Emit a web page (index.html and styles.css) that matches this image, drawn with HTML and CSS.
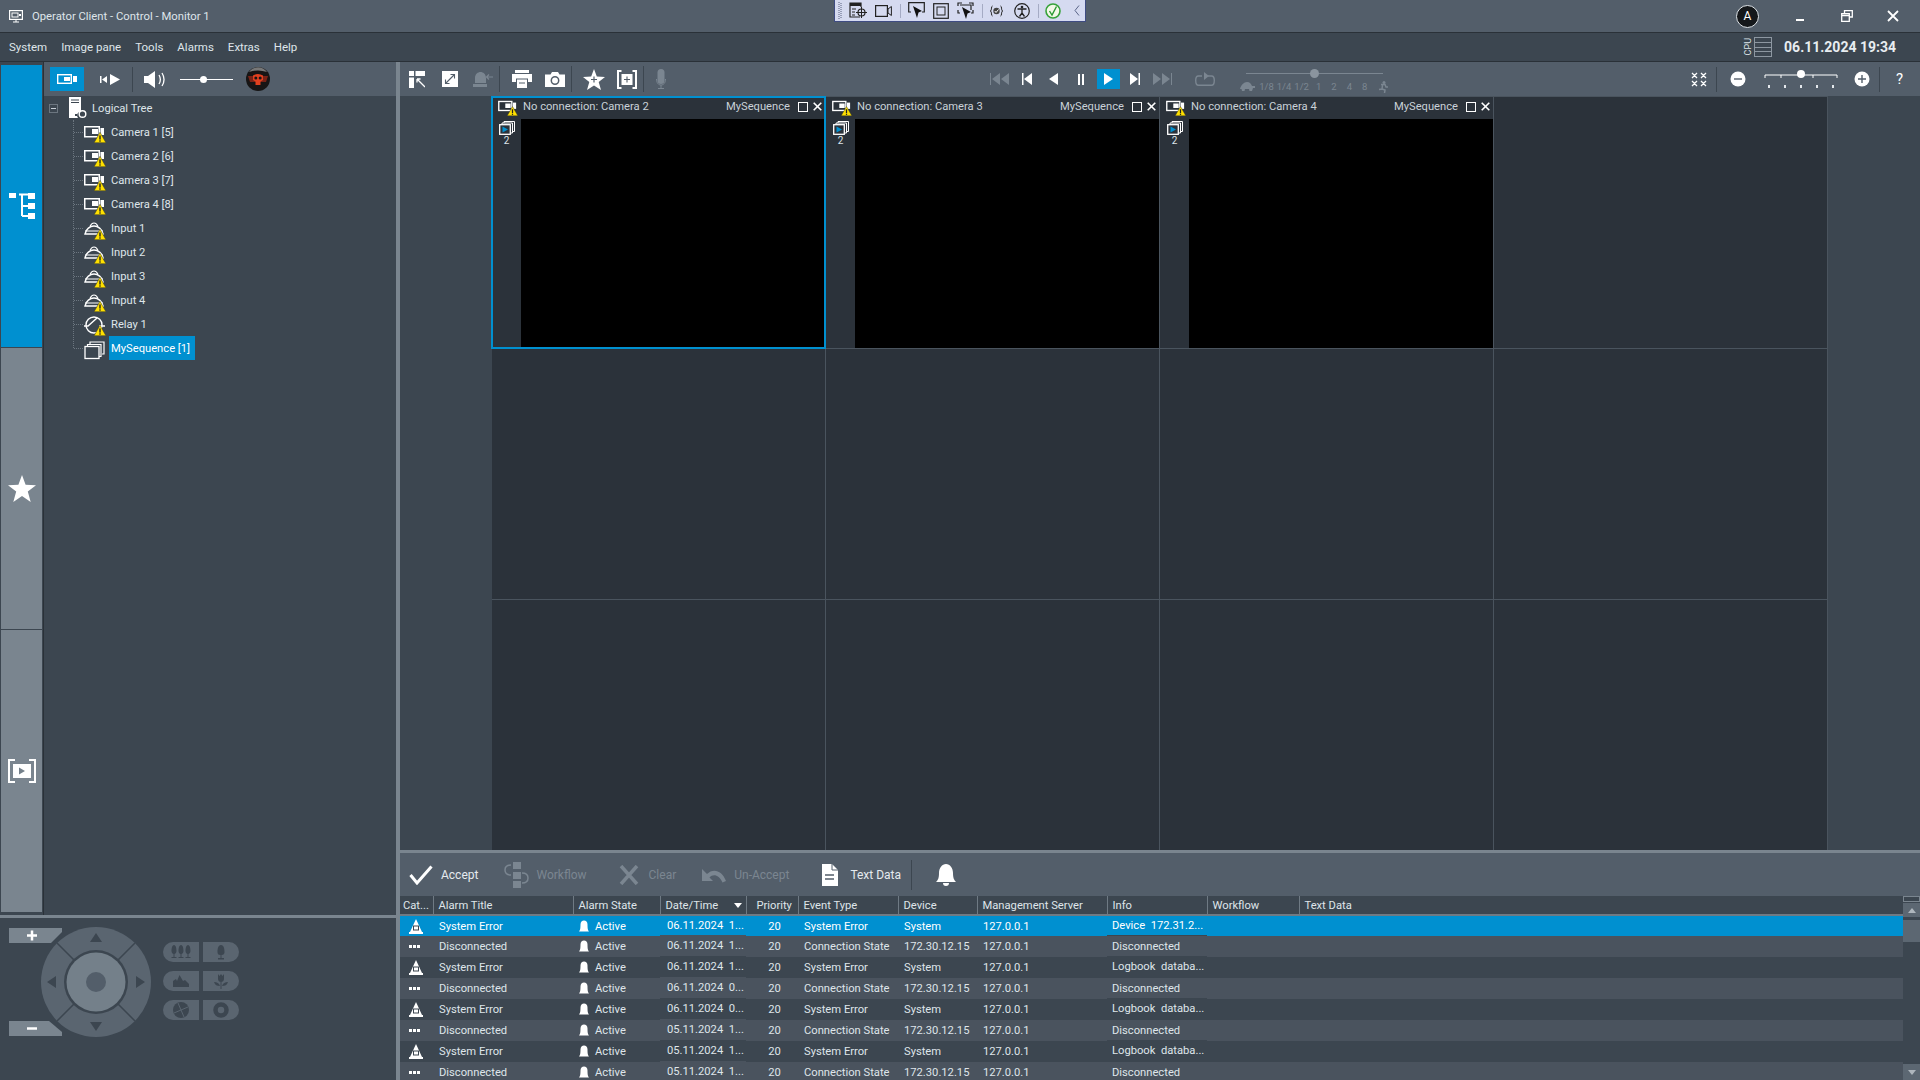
FILE: index.html
```html
<!DOCTYPE html>
<html lang="en">
<head>
  <meta charset="UTF-8">
  <title>Operator Client - Control - Monitor 1</title>
  <link rel="stylesheet" href="styles.css">
</head>
<body>
  <svg class="defs" xmlns="http://www.w3.org/2000/svg">
    <symbol id="warn" viewBox="0 0 12 11"><path d="M6 .3 11.900 10.700H.1Z" fill="#ffe000" stroke="#3a3a20" stroke-width=".5"/><rect x="5.300" y="3.400" width="1.400" height="4.200" fill="#222"/><rect x="5.300" y="8.300" width="1.400" height="1.400" fill="#222"/></symbol>
    <symbol id="cam" viewBox="0 0 22 20"><rect x=".75" y="2.750" width="14.500" height="10" fill="none" stroke="#fff" stroke-width="1.500"/><rect x="8" y="5" width="6" height="5" fill="#fff"/><rect x="16.500" y="4" width="3.500" height="7" fill="#fff"/><use href="#warn" x="10" y="8" width="12" height="11"/></symbol>
    <symbol id="input" viewBox="0 0 22 20"><path d="M1 14C2 9 6 6 10 6s8 3 9 8Z" fill="none" stroke="#fff" stroke-width="1.400"/><path d="M6 6.500C7 4 9 3 10 3s3 1 4 3.500M1 11H19" fill="none" stroke="#fff" stroke-width="1.200"/><use href="#warn" x="10" y="9" width="12" height="11"/></symbol>
    <symbol id="relay" viewBox="0 0 22 20"><circle cx="10" cy="9" r="8" fill="none" stroke="#fff" stroke-width="1.400"/><path d="M0 10H4L13 2M15 10H21" fill="none" stroke="#fff" stroke-width="1.400"/><use href="#warn" x="10" y="9" width="12" height="11"/></symbol>
    <symbol id="seq" viewBox="0 0 22 20"><path d="M6 4V2H20V14H18M3.500 6.500V4.500H17V16.500H15" fill="none" stroke="#fff" stroke-width="1.200"/><rect x="1" y="6.500" width="14" height="12" fill="none" stroke="#fff" stroke-width="1.300"/></symbol>
    <symbol id="seqplay" viewBox="0 0 16 14"><path d="M5 2V.5H15.500V10.500H13.500M3 3.500V2H13.500V12H11.500" fill="none" stroke="#fff"/><rect x=".7" y="3.700" width="10.600" height="9.600" fill="#2b323a" stroke="#fff" stroke-width="1.300"/><path d="M3.500 5.500 9 8.500 3.500 11.500Z" fill="#0090d0"/></symbol>
    <symbol id="bell" viewBox="0 0 10 12"><path d="M0 11.500C1 10.500 1.500 9 1.500 4.500 1.500 2 3 .5 5 .5S8.500 2 8.500 4.500C8.500 9 9 10.500 10 11.500Z" fill="#fff"/></symbol>
    <symbol id="alarmcat" viewBox="0 0 14 15"><path d="M7 0 13 13H1Z" fill="#fff"/><rect x="4.500" y="7" width="5" height="4" fill="none" stroke="#3c4650"/><rect x="0" y="13" width="14" height="2" fill="#fff"/></symbol>
    <symbol id="dots" viewBox="0 0 11 3"><path d="M0 0H3V3H0ZM4 0H7V3H4ZM8 0H11V3H8Z" fill="#fff"/></symbol>
    <symbol id="xmark" viewBox="0 0 9 9"><path d="M.7 .7 8.300 8.300M8.300 .7 .7 8.300" stroke="#fff" stroke-width="1.600"/></symbol>
  </svg>

  <header class="titlebar">
    <svg class="app-icon" viewBox="0 0 14 13"><rect x=".6" y=".6" width="12.800" height="8.800" fill="none" stroke="#fff" stroke-width="1.200"/><rect x="3" y="3" width="6" height="4" fill="none" stroke="#fff"/><rect x="10" y="4" width="2" height="2" fill="#fff"/><path d="M4 12H10M7 10V12" stroke="#fff"/></svg>
    <span class="title-text">Operator Client - Control - Monitor 1</span>
    <div class="user-badge">A</div>
    <div class="win-buttons">
      <svg class="win-btn" viewBox="0 0 12 12"><rect x="1" y="9" width="8" height="2" fill="#fff"/></svg>
      <svg class="win-btn" viewBox="0 0 12 12"><path d="M3.500 3V.7H11.300V7H8.500M.7 3.700H8.300V11.300H.7ZM.7 5.500H8.300" fill="none" stroke="#fff" stroke-width="1.300"/></svg>
      <svg class="win-btn" viewBox="0 0 12 12"><path d="M1 1 11 11M11 1 1 11" stroke="#fff" stroke-width="1.800"/></svg>
    </div>
  </header>

  <div class="tray">
    <svg width="4" height="19" viewBox="0 0 4 19"><path d="M1 1V18M3 2V18" stroke="#59617f" stroke-width="1" stroke-dasharray="1 1"/></svg>
    <svg class="tray-i tray-first" width="18" height="17" viewBox="0 0 18 17"><path d="M11 15H1V1H12V5" fill="none" stroke="#222" stroke-width="1.200"/><rect x="1" y="1" width="11" height="3" fill="#222"/><path d="M3 7H7M3 10H6M3 13H6" stroke="#222"/><circle cx="12.500" cy="10.500" r="3.500" fill="none" stroke="#222" stroke-width="1.200"/><path d="M12.500 5V16M7 10.500H18" stroke="#222"/></svg>
    <svg class="tray-i" width="17" height="12" viewBox="0 0 17 12"><rect x=".6" y=".6" width="11.800" height="10.800" fill="none" stroke="#222" stroke-width="1.200"/><path d="M13 4 16.400 1.500V10.500L13 8Z" fill="none" stroke="#222"/></svg>
    <i class="tray-sep"></i>
    <svg class="tray-i" width="17" height="17" viewBox="0 0 17 17"><path d="M3 10H.7V.7H16.300V10H14" fill="none" stroke="#222" stroke-width="1.200"/><path d="M5 4 14 9 10.500 10.500 9 16Z" fill="#111"/></svg>
    <svg class="tray-i" width="16" height="16" viewBox="0 0 16 16"><rect x=".7" y=".7" width="14.600" height="14.600" fill="none" stroke="#222" stroke-width="1.200"/><rect x="4" y="4" width="8" height="8" fill="none" stroke="#222"/></svg>
    <svg class="tray-i" width="17" height="17" viewBox="0 0 17 17"><path d="M1 4V1H5M12 1H16V4M1 8V11H3M16 8V11H14M3 3H14V8" fill="none" stroke="#222" stroke-width="1.200"/><path d="M5 5 14 10 10.500 11.500 9 17Z" fill="#111"/></svg>
    <i class="tray-sep"></i>
    <svg class="tray-i" width="13" height="12" viewBox="0 0 13 12"><path d="M2.500 1C1 1 2 5 .5 6 2 7 1 11 2.500 11M10.500 1C12 1 11 5 12.500 6 11 7 12 11 10.500 11" fill="none" stroke="#222"/><circle cx="6.500" cy="6" r="3.200" fill="#444"/><path d="M4.800 6 6 7.500 8.500 4.500" fill="none" stroke="#fff"/></svg>
    <svg class="tray-i tray-person" width="16" height="16" viewBox="0 0 16 16"><circle cx="8" cy="8" r="7.300" fill="none" stroke="#222" stroke-width="1.200"/><circle cx="8" cy="4" r="1.300" fill="#222"/><path d="M3.500 6H12.500M8 6V10M8 10 5.500 13.500M8 10 10.500 13.500" fill="none" stroke="#222" stroke-width="1.300"/></svg>
    <i class="tray-sep"></i>
    <svg class="tray-i tray-check" width="16" height="16" viewBox="0 0 16 16"><circle cx="8" cy="8" r="7" fill="#f3f8e8" stroke="#36a23a" stroke-width="1.600"/><path d="M4.500 8 7 12 11.500 3.500" fill="none" stroke="#2b9a34" stroke-width="1.400"/></svg>
    <svg class="tray-i tray-last" width="6" height="11" viewBox="0 0 6 11"><path d="M5 .5 1 5.500 5 10.500" fill="none" stroke="#5a6488"/></svg>
  </div>

  <nav class="menubar">
    <span class="menu-item">System</span>
    <span class="menu-item">Image pane</span>
    <span class="menu-item">Tools</span>
    <span class="menu-item">Alarms</span>
    <span class="menu-item">Extras</span>
    <span class="menu-item">Help</span>
    <div class="clock">
      <span class="cpu-label">CPU</span>
      <div class="cpu-bars"><i></i><i></i><i></i><i></i></div>
      <span class="clock-text">06.11.2024 19:34</span>
    </div>
  </nav>

  <div class="workspace">
    <aside class="side">
      <div class="side-top">
        <div class="rail">
          <div class="rail-tab rail-active">
            <svg width="26" height="26" viewBox="0 0 26 26"><path d="M0 0H7V5H0ZM19 0H26V6H19ZM19 10H26V16H19ZM19 20H26V26H19Z" fill="#fff"/><path d="M10 1.500H19M13 1.500V23M13 13H19M13 23H19" fill="none" stroke="#fff" stroke-width="2"/></svg>
          </div>
          <div class="rail-tab">
            <svg width="28" height="28" viewBox="0 0 28 28"><path d="M14 0 17.600 9.800 28 10.200 19.800 16.600 22.700 27 14 21.100 5.300 27 8.200 16.600 0 10.200 10.400 9.800Z" fill="#fff"/></svg>
          </div>
          <div class="rail-tab">
            <svg width="28" height="24" viewBox="0 0 28 24"><path d="M7 1H1V23H7M21 1H27V23H21" fill="none" stroke="#fff" stroke-width="2"/><rect x="5" y="5" width="18" height="14" fill="#fff"/><path d="M11 8.500 17 12 11 15.500Z" fill="#74808a"/></svg>
          </div>
        </div>
        <div class="tree-pane">
          <div class="tree-tools">
            <div class="tool-active">
              <svg width="20" height="10" viewBox="0 0 20 10"><rect x=".7" y=".7" width="13.600" height="8.600" fill="none" stroke="#fff" stroke-width="1.400"/><rect x="7" y="3" width="6" height="4" fill="#fff"/><rect x="16" y="2" width="4" height="6" fill="#fff"/></svg>
            </div>
            <svg class="tool-play" width="20" height="11" viewBox="0 0 20 11"><path d="M0 2H1.500V9H0ZM7 2V9L2 5.500ZM10 0 20 5.500 10 11Z" fill="#fff"/></svg>
            <i class="divider tree-div"></i>
            <svg class="tool-speaker" width="21" height="17" viewBox="0 0 21 17"><path d="M0 5H4L11 0V17L4 12H0Z" fill="#fff"/><path d="M15 4C16.500 6.500 16.500 10.500 15 13M18 2C20.500 6 20.500 11 18 15" fill="none" stroke="#fff" stroke-width="1.300"/></svg>
            <div class="vol"><i class="vol-thumb"></i></div>
            <svg class="skull" width="24" height="24" viewBox="0 0 24 24"><circle cx="12" cy="12" r="12" fill="#171515"/><path d="M3 5A11 11 0 0 1 21 5Q12 2 3 5Z" fill="#777"/><path d="M2 9H22L20 15H4Z" fill="#7a2216"/><path d="M7 8.500Q12 5.500 17 8.500V13L14.500 14.500V18H9.500V14.500L7 13Z" fill="#e0401f"/><circle cx="9.800" cy="11" r="1.500" fill="#171515"/><circle cx="14.200" cy="11" r="1.500" fill="#171515"/></svg>
          </div>
          <div class="tree">
            <div class="tree-row tree-root">
              <span class="expander"></span>
              <svg class="root-icon" width="18" height="22" viewBox="0 0 18 22"><path d="M0 0H12V15H10A4 4 0 0 0 9 21H0Z" fill="#fff"/><path d="M2 3H10M2 5.500H10" stroke="#3c4650"/><circle cx="13.500" cy="17" r="3.300" fill="none" stroke="#fff" stroke-width="1.400"/><rect x="6" y="17" width="2" height="2" fill="#3c4650"/></svg>
              <span class="tree-label">Logical Tree</span>
            </div>
            <div class="tree-children">
              <div class="tree-row"><svg class="tree-icon"><use href="#cam"/></svg><span class="tree-label">Camera 1 [5]</span></div>
              <div class="tree-row"><svg class="tree-icon"><use href="#cam"/></svg><span class="tree-label">Camera 2 [6]</span></div>
              <div class="tree-row"><svg class="tree-icon"><use href="#cam"/></svg><span class="tree-label">Camera 3 [7]</span></div>
              <div class="tree-row"><svg class="tree-icon"><use href="#cam"/></svg><span class="tree-label">Camera 4 [8]</span></div>
              <div class="tree-row"><svg class="tree-icon"><use href="#input"/></svg><span class="tree-label">Input 1</span></div>
              <div class="tree-row"><svg class="tree-icon"><use href="#input"/></svg><span class="tree-label">Input 2</span></div>
              <div class="tree-row"><svg class="tree-icon"><use href="#input"/></svg><span class="tree-label">Input 3</span></div>
              <div class="tree-row"><svg class="tree-icon"><use href="#input"/></svg><span class="tree-label">Input 4</span></div>
              <div class="tree-row"><svg class="tree-icon"><use href="#relay"/></svg><span class="tree-label">Relay 1</span></div>
              <div class="tree-row"><svg class="tree-icon"><use href="#seq"/></svg><span class="tree-label tree-selected">MySequence [1]</span></div>
            </div>
          </div>
        </div>
      </div>
      <div class="ptz">
        <svg class="dial" width="160" height="112" viewBox="0 0 160 112">
          <path d="M0 0H53V4L42 15H0Z" fill="#7a858f"/>
          <path d="M0 93H40L53 104V108H0Z" fill="#7a858f"/>
          <path d="M18 7.500H28M23 2.500V12.500" stroke="#fff" stroke-width="2.500"/>
          <path d="M18 100.500H28" stroke="#fff" stroke-width="2.500"/>
          <circle cx="87" cy="54" r="55" fill="#5a6570"/>
          <path d="M48 15 126 93M126 15 48 93" stroke="#3c4650" stroke-width="1.500"/>
          <circle cx="87" cy="54" r="32" fill="#3c4650"/>
          <circle cx="87" cy="54" r="29.500" fill="#74808a"/>
          <circle cx="87" cy="54" r="10" fill="#535e6a"/>
          <path d="M81 14 87 5 93 14ZM81 94 87 103 93 94ZM47 48 38 54 47 60ZM127 48 136 54 127 60Z" fill="#3c4650"/>
        </svg>
        <div class="pills">
          <div class="pill pill-l"><svg width="20" height="14" viewBox="0 0 20 14"><path d="M3 0C5 0 5.500 4 5.500 6S4 9 3.500 9V12H5.500V13H.500V12H2.500V9C2 9 .5 8 .5 6S1 0 3 0ZM10 0C12 0 12.500 4 12.500 6S11 9 10.500 9V12H12.500V13H7.500V12H9.500V9C9 9 7.500 8 7.500 6S8 0 10 0ZM17 0C19 0 19.500 4 19.500 6S18 9 17.500 9V12H19.500V13H14.500V12H16.500V9C16 9 14.500 8 14.500 6S15 0 17 0Z" fill="#3c4650"/></svg></div>
          <div class="pill pill-r"><svg width="8" height="15" viewBox="0 0 8 15"><path d="M4 0C7 0 7.500 4 7.500 7S5 10 4.500 10V13H7V14.500H1V13H3.500V10C3 10 .5 10 .5 7S1 0 4 0Z" fill="#3c4650"/></svg></div>
          <div class="pill pill-l"><svg width="16" height="12" viewBox="0 0 16 12"><path d="M0 12V6L3 4 4 6 6.500 0 10 6 12 5 16 9V12Z" fill="#3c4650"/></svg></div>
          <div class="pill pill-r"><svg width="14" height="15" viewBox="0 0 14 15"><path d="M4 0 5.500 2 7 0 8.500 2 10 0V5C10 7 8.500 8 7 8S4 7 4 5ZM6.500 8H7.500V15H6.500ZM0 8C3 8 5 9 6 12 3 12 1 11 0 8ZM14 8C11 8 9 9 8 12 11 12 13 11 14 8Z" fill="#3c4650"/></svg></div>
          <div class="pill pill-l"><svg width="16" height="16" viewBox="0 0 16 16"><circle cx="8" cy="8" r="8" fill="#3c4650"/><path d="M8 8 5 1M8 8 15 5M8 8 11 15M8 8 1 11" stroke="#5a6570"/></svg></div>
          <div class="pill pill-r"><svg width="16" height="16" viewBox="0 0 16 16"><circle cx="8" cy="8" r="5.500" fill="none" stroke="#3c4650" stroke-width="4.500"/></svg></div>
        </div>
      </div>
    </aside>

    <main class="content">
      <div class="toolbar">
        <div class="tools-view">
          <div class="tool"><svg width="16" height="17" viewBox="0 0 16 17"><path d="M0 0H5V5H0ZM6.500 0H16V5H6.500ZM0 6.500H5V17H0Z" fill="#fff"/><path d="M8 8V11.500M8 8H11.500M8 8 16 16" fill="none" stroke="#fff" stroke-width="1.300"/></svg></div>
          <div class="tool"><svg width="16" height="16" viewBox="0 0 16 16"><rect width="16" height="16" fill="#fff"/><path d="M3.500 12.500 12.500 3.500M8.500 3.500H12.500V7.500M3.500 8.500V12.500H7.500" fill="none" stroke="#535e6a" stroke-width="1.100"/></svg></div>
          <div class="tool"><svg width="20" height="16" viewBox="0 0 20 16"><path d="M0 16V13H14V16ZM2 12V7C2 3 5 1 7.500 1S13 3 13 7V12Z" fill="#7b8691"/><path d="M14 6H20M16 3.500 13.500 6 16 8.500" fill="none" stroke="#7b8691" stroke-width="1.200"/></svg></div>
          <i class="divider view-div"></i>
          <div class="tool"><svg width="20" height="18" viewBox="0 0 20 18"><path d="M3 0H17V3H3ZM0 4H20V12H16V8.500H4V12H0Z" fill="#fff"/><path d="M5 9.500H15V18H5Z" fill="#fff"/><path d="M7 13H13" stroke="#535e6a"/></svg></div>
          <div class="tool"><svg width="20" height="15" viewBox="0 0 20 15"><path d="M0 2.500H5.500L7 0H13L14.500 2.500H20V15H0Z" fill="#fff"/><circle cx="10" cy="8.500" r="3.700" fill="none" stroke="#535e6a" stroke-width="1.500"/></svg></div>
          <i class="divider view-div"></i>
          <div class="tool"><svg width="22" height="21" viewBox="0 0 22 21"><path d="M11 0 13.800 7.400 22 8 15.700 13 18 21 11 16.500 4 21 6.300 13 0 8 8.200 7.400Z" fill="#fff"/><path d="M11 7.500V13.500M8 10.500H14" stroke="#535e6a" stroke-width="1.200"/></svg></div>
          <div class="tool"><svg width="20" height="19" viewBox="0 0 20 19"><path d="M4.500 1H1V18H4.500M15.500 1H19V18H15.500" fill="none" stroke="#fff" stroke-width="2"/><rect x="4.500" y="4" width="11" height="11" fill="#fff"/><path d="M10 6.500V12.500M7 9.500H13" stroke="#535e6a" stroke-width="1.100"/></svg></div>
          <i class="divider view-div"></i>
          <div class="tool tool-mic"><svg width="10" height="20" viewBox="0 0 10 20"><rect x="1.500" width="7" height="15" rx="3.500" fill="#7b8691"/><path d="M.5 10C.5 14 2.500 16 5 16S9.500 14 9.500 10M5 16V19M2 19.500H8" fill="none" stroke="#7b8691"/></svg></div>
        </div>
        <div class="tools-play">
          <div class="ptool"><svg width="19" height="12" viewBox="0 0 19 12"><path d="M0 0H1V12H0ZM10 0V12L2 6ZM19 0V12L11 6Z" fill="#7b8691"/></svg></div>
          <div class="ptool"><svg width="10" height="12" viewBox="0 0 10 12"><path d="M0 0H1.500V12H0ZM10 0V12L2 6Z" fill="#fff"/></svg></div>
          <div class="ptool"><svg width="9" height="12" viewBox="0 0 9 12"><path d="M9 0V12L0 6Z" fill="#fff"/></svg></div>
          <div class="ptool"><svg width="6" height="11" viewBox="0 0 6 11"><path d="M0 0H2V11H0ZM4 0H6V11H4Z" fill="#fff"/></svg></div>
          <div class="ptool ptool-on"><svg width="9" height="12" viewBox="0 0 9 12"><path d="M0 0V12L9 6Z" fill="#fff"/></svg></div>
          <div class="ptool"><svg width="10" height="12" viewBox="0 0 10 12"><path d="M0 0V12L8 6ZM8.500 0H10V12H8.500Z" fill="#fff"/></svg></div>
          <div class="ptool"><svg width="19" height="12" viewBox="0 0 19 12"><path d="M0 0V12L8 6ZM9 0V12L17 6ZM18 0H19V12H18Z" fill="#7b8691"/></svg></div>
          <svg class="loop" width="20" height="14" viewBox="0 0 20 14"><path d="M7 4H3.500C1.500 4 .7 5.500 .7 8.500S1.500 13.300 3.500 13.300H16.500C18.500 13.300 19.300 11.500 19.300 8.500S18.500 4 16.500 4H13" fill="none" stroke="#7b8691" stroke-width="1.400"/><path d="M9 0 14 4 9 8Z" fill="#7b8691"/></svg>
          <div class="speed">
            <div class="speed-track"><i class="speed-thumb"></i></div>
            <div class="speed-labels">
              <svg width="15" height="9" viewBox="0 0 15 9"><path d="M0 7C1 3 4 0 7 0S11 2 12 4H15V6H13L12 9H9.500L9 7H5L4.500 9H2L1.500 7Z" fill="#7b8691"/></svg>
              <span class="speed-t speed-first">1/8</span><span class="speed-t">1/4</span><span class="speed-t">1/2</span>
              <span class="speed-t speed-one">1</span><span class="speed-t speed-n">2</span><span class="speed-t speed-n">4</span><span class="speed-t speed-n">8</span>
              <svg class="runner" width="10" height="12" viewBox="0 0 10 12"><circle cx="6" cy="1.500" r="1.500" fill="#7b8691"/><path d="M3 3.500H7L8 6H10M4.500 4 4 8 1 8.500M4 8 7 9 6.500 12" fill="none" stroke="#7b8691" stroke-width="1.500"/></svg>
            </div>
          </div>
        </div>
        <div class="tools-zoom">
          <svg width="16" height="15" viewBox="0 0 16 15"><path d="M1 1 6 6M6 1 1 6M10 1 15 6M15 1 10 6M1 9 6 14M6 9 1 14M10 9 15 14M15 9 10 14" stroke="#fff" stroke-width="1.300"/></svg>
          <i class="divider zoom-div"></i>
          <svg class="zoom-btn" width="16" height="16" viewBox="0 0 16 16"><circle cx="8" cy="8" r="7.500" fill="#fff"/><path d="M4 8H12" stroke="#535e6a" stroke-width="1.400"/></svg>
          <svg class="zoom-slider" width="74" height="20" viewBox="0 0 74 20"><path d="M1 6H73M1 6V9M17 6V9M49 6V9M73 6V9" stroke="#fff"/><circle cx="37" cy="5" r="4" fill="#fff"/><path d="M4 16h2v3H4zM20 16h2v3h-2zM36 16h2v3h-2zM52 16h2v3h-2zM68 16h2v3h-2z" fill="#e4e8ec"/></svg>
          <svg class="zoom-btn" width="16" height="16" viewBox="0 0 16 16"><circle cx="8" cy="8" r="7.500" fill="#fff"/><path d="M4 8H12M8 4V12" stroke="#535e6a" stroke-width="1.400"/></svg>
          <i class="divider help-div"></i>
          <span class="help">?</span>
        </div>
      </div>

      <section class="video-grid">
        <div class="pane pane-selected">
          <div class="pane-head"><svg class="pane-cam"><use href="#cam"/></svg><span class="pane-title">No connection: Camera 2</span><span class="pane-seq">MySequence</span><i class="pane-max"></i><svg class="pane-x"><use href="#xmark"/></svg></div>
          <div class="pane-strip"><svg width="16" height="14"><use href="#seqplay"/></svg><span>2</span></div>
          <div class="pane-video"></div>
        </div>
        <div class="pane">
          <div class="pane-head"><svg class="pane-cam"><use href="#cam"/></svg><span class="pane-title">No connection: Camera 3</span><span class="pane-seq">MySequence</span><i class="pane-max"></i><svg class="pane-x"><use href="#xmark"/></svg></div>
          <div class="pane-strip"><svg width="16" height="14"><use href="#seqplay"/></svg><span>2</span></div>
          <div class="pane-video"></div>
        </div>
        <div class="pane">
          <div class="pane-head"><svg class="pane-cam"><use href="#cam"/></svg><span class="pane-title">No connection: Camera 4</span><span class="pane-seq">MySequence</span><i class="pane-max"></i><svg class="pane-x"><use href="#xmark"/></svg></div>
          <div class="pane-strip"><svg width="16" height="14"><use href="#seqplay"/></svg><span>2</span></div>
          <div class="pane-video"></div>
        </div>
        <div class="pane-empty"></div>
        <div class="pane-empty"></div><div class="pane-empty"></div><div class="pane-empty"></div><div class="pane-empty"></div>
        <div class="pane-empty"></div><div class="pane-empty"></div><div class="pane-empty"></div><div class="pane-empty"></div>
      </section>

      <section class="alarms">
        <div class="alarm-tools">
          <svg class="a-accept" width="24" height="20" viewBox="0 0 24 20"><path d="M1.500 10 8 18 22.500 1.500" fill="none" stroke="#fff" stroke-width="3"/></svg>
          <span class="a-label a-accept-t">Accept</span>
          <svg class="a-flow" width="25" height="26" viewBox="0 0 25 26"><rect x="9" y="0" width="8" height="7" fill="#7b8691"/><rect x="9" y="10" width="8" height="7" fill="#7b8691"/><rect x="9" y="19" width="8" height="7" fill="#7b8691"/><path d="M7 3C2 3 1 6 1 8S2 13 7 13M18 11C23 11 24 14 24 16S23 21 18 21" fill="none" stroke="#7b8691" stroke-width="1.500"/></svg>
          <span class="a-label a-off a-flow-t">Workflow</span>
          <svg class="a-clear" width="20" height="20" viewBox="0 0 20 20"><path d="M2 1 18 19M18 1 2 19" stroke="#7b8691" stroke-width="3.500"/></svg>
          <span class="a-label a-off a-clear-t">Clear</span>
          <svg class="a-undo" width="24" height="16" viewBox="0 0 24 16"><path d="M0 2V14H11L7.500 10.500C11 6.500 17 7.500 20.500 15.500L24 14C20 3 11 1 5 7L0 2Z" fill="#7b8691"/></svg>
          <span class="a-label a-off a-undo-t">Un-Accept</span>
          <svg class="a-text" width="16" height="22" viewBox="0 0 16 22"><path d="M0 0H10L16 6V22H0Z" fill="#fff"/><path d="M3 11H12M3 15H12" stroke="#535e6a" stroke-width="1.500"/><path d="M10 0V6H16" fill="none" stroke="#535e6a"/></svg>
          <span class="a-label a-text-t">Text Data</span>
          <i class="divider a-div"></i>
          <svg class="a-bell" width="20" height="22" viewBox="0 0 20 22"><path d="M0 18C2 16 3 14 3 9 3 4 6 0 10 0S17 4 17 9C17 14 18 16 20 18ZM7 19H13C13 21 12 22 10 22S7 21 7 19Z" fill="#fff"/></svg>
        </div>
        <div class="alarm-body">
          <div class="alarm-table-wrap">
            <table class="alarm-table">
              <colgroup><col class="c-cat"><col class="c-title"><col class="c-state"><col class="c-date"><col class="c-prio"><col class="c-event"><col class="c-dev"><col class="c-srv"><col class="c-info"><col class="c-flow"><col></colgroup>
              <thead><tr><th class="th-cat">Cat...</th><th>Alarm Title</th><th>Alarm State</th><th class="th-date">Date/Time<i class="sort"></i></th><th class="th-prio">Priority</th><th>Event Type</th><th>Device</th><th>Management Server</th><th>Info</th><th>Workflow</th><th>Text Data</th></tr></thead>
              <tbody>
                <tr class="row-on"><td class="td-cat"><svg width="14" height="15"><use href="#alarmcat"/></svg></td><td>System Error</td><td><svg class="bell" width="10" height="12"><use href="#bell"/></svg>Active</td><td class="td-date">06.11.2024&nbsp; 1...</td><td class="td-prio">20</td><td>System Error</td><td>System</td><td>127.0.0.1</td><td class="td-info td-raised">Device&nbsp; 172.31.2...</td><td></td><td></td></tr>
                <tr><td class="td-cat"><svg class="dots" width="11" height="3"><use href="#dots"/></svg></td><td>Disconnected</td><td><svg class="bell" width="10" height="12"><use href="#bell"/></svg>Active</td><td class="td-date">06.11.2024&nbsp; 1...</td><td class="td-prio">20</td><td>Connection State</td><td>172.30.12.15</td><td>127.0.0.1</td><td class="td-info">Disconnected</td><td></td><td></td></tr>
                <tr><td class="td-cat"><svg width="14" height="15"><use href="#alarmcat"/></svg></td><td>System Error</td><td><svg class="bell" width="10" height="12"><use href="#bell"/></svg>Active</td><td class="td-date">06.11.2024&nbsp; 1...</td><td class="td-prio">20</td><td>System Error</td><td>System</td><td>127.0.0.1</td><td class="td-info td-raised">Logbook&nbsp; databa...</td><td></td><td></td></tr>
                <tr><td class="td-cat"><svg class="dots" width="11" height="3"><use href="#dots"/></svg></td><td>Disconnected</td><td><svg class="bell" width="10" height="12"><use href="#bell"/></svg>Active</td><td class="td-date">06.11.2024&nbsp; 0...</td><td class="td-prio">20</td><td>Connection State</td><td>172.30.12.15</td><td>127.0.0.1</td><td class="td-info">Disconnected</td><td></td><td></td></tr>
                <tr><td class="td-cat"><svg width="14" height="15"><use href="#alarmcat"/></svg></td><td>System Error</td><td><svg class="bell" width="10" height="12"><use href="#bell"/></svg>Active</td><td class="td-date">06.11.2024&nbsp; 0...</td><td class="td-prio">20</td><td>System Error</td><td>System</td><td>127.0.0.1</td><td class="td-info td-raised">Logbook&nbsp; databa...</td><td></td><td></td></tr>
                <tr><td class="td-cat"><svg class="dots" width="11" height="3"><use href="#dots"/></svg></td><td>Disconnected</td><td><svg class="bell" width="10" height="12"><use href="#bell"/></svg>Active</td><td class="td-date">05.11.2024&nbsp; 1...</td><td class="td-prio">20</td><td>Connection State</td><td>172.30.12.15</td><td>127.0.0.1</td><td class="td-info">Disconnected</td><td></td><td></td></tr>
                <tr><td class="td-cat"><svg width="14" height="15"><use href="#alarmcat"/></svg></td><td>System Error</td><td><svg class="bell" width="10" height="12"><use href="#bell"/></svg>Active</td><td class="td-date">05.11.2024&nbsp; 1...</td><td class="td-prio">20</td><td>System Error</td><td>System</td><td>127.0.0.1</td><td class="td-info td-raised">Logbook&nbsp; databa...</td><td></td><td></td></tr>
                <tr><td class="td-cat"><svg class="dots" width="11" height="3"><use href="#dots"/></svg></td><td>Disconnected</td><td><svg class="bell" width="10" height="12"><use href="#bell"/></svg>Active</td><td class="td-date">05.11.2024&nbsp; 1...</td><td class="td-prio">20</td><td>Connection State</td><td>172.30.12.15</td><td>127.0.0.1</td><td class="td-info">Disconnected</td><td></td><td></td></tr>
              </tbody>
            </table>
          </div>
          <div class="scrollbar">
            <div class="sb-cap"></div>
            <div class="sb-btn"><i class="sb-up"></i></div>
            <div class="sb-thumb"></div>
            <div class="sb-btn sb-down"><i class="sb-dn"></i></div>
          </div>
        </div>
      </section>
    </main>
  </div>
</body>
</html>
```

FILE: styles.css
```css
* { box-sizing: border-box; }
html, body { margin: 0; height: 100%; }
body {
  width: 1920px;
  height: 1080px;
  overflow: hidden;
  display: flex;
  flex-direction: column;
  position: relative;
  background: #3c4650;
  color: #dfe5ea;
  font: 11.2px Roboto, "Liberation Sans", sans-serif;
}
.defs { position: absolute; width: 0; height: 0; }
svg { display: block; flex: none; }

/* title + menu */
.titlebar {
  height: 33px;
  background: #535e6a;
  border-bottom: 1px solid #2a3138;
  display: flex;
  align-items: center;
  flex: none;
}
.app-icon { width: 14px; height: 13px; margin-left: 9px; }
.title-text { margin-left: 9px; color: #dfe5ea; font-size: 11.300px; }
.user-badge {
  margin-left: auto;
  width: 23px;
  height: 23px;
  border-radius: 50%;
  background: #15181b;
  border: 1px solid #dfe5ea;
  color: #fff;
  text-align: center;
  line-height: 21px;
  font-size: 12px;
}
.win-buttons { display: flex; margin-left: 36px; margin-right: 21px; gap: 34px; }
.win-btn { width: 12px; height: 12px; }

.tray {
  position: absolute;
  left: 834px;
  top: 0;
  width: 252px;
  height: 22px;
  background: #d5daf0;
  border: 1px solid #3f4c82;
  border-top: 0;
  display: flex;
  align-items: center;
  padding-left: 3px;
}
.tray-i { margin-left: 8px; }
.tray-sep { width: 1px; height: 14px; background: #a5abc4; margin-left: 8px; }
.tray-sep + .tray-i { margin-left: 7px; }
.tray-i.tray-first { margin-left: 7px; }
.tray-i.tray-person { margin-left: 11px; }
.tray-sep + .tray-i.tray-check { margin-left: 6px; }
.tray-i.tray-last { margin-left: 13px; }

.menubar {
  height: 29px;
  background: #3c4650;
  border-bottom: 1px solid #2a3138;
  display: flex;
  align-items: center;
  padding-left: 9px;
  gap: 14px;
  flex: none;
  font-size: 11.500px;
}
.clock { margin-left: auto; display: flex; align-items: center; padding-right: 24px; }
.cpu-label {
  writing-mode: vertical-rl;
  transform: rotate(180deg);
  font-size: 9px;
  line-height: 9px;
}
.cpu-bars { width: 18px; height: 20px; display: flex; flex-direction: column; margin-left: 1px; border-left: 1px solid #8d97a1; border-right: 1px solid #8d97a1; border-top: 1px solid #8d97a1; }
.cpu-bars i { flex: 1; border-bottom: 1px solid #8d97a1; }
.clock-text { margin-left: 12px; font-weight: 700; font-size: 14px; color: #e8edf1; }

/* layout */
.workspace { flex: 1; display: flex; min-height: 0; }
.side {
  width: 400px;
  flex: none;
  border-right: 4px solid #7a858f;
  display: flex;
  flex-direction: column;
}
.side-top { flex: none; height: 856px; display: flex; border-bottom: 3px solid #7a858f; }
.rail { width: 44px; flex: none; padding: 3px 1px 3px 1px; display: flex; flex-direction: column; gap: 1px; border-right: 1px solid #2a3138; }
.rail-tab {
  flex: 1;
  background: #7a858f;
  display: flex;
  align-items: center;
  justify-content: center;
}
.rail-active { background: #0090d0; }
.tree-pane { flex: 1; }

.tree-tools { height: 34px; background: #535e6a; display: flex; align-items: center; padding-left: 6px; }
.tool-active { width: 34px; height: 24px; background: #0090d0; display: flex; align-items: center; justify-content: center; }
.tool-play { margin-left: 16px; }
.divider { width: 1px; background: #3c4650; flex: none; align-self: center; }
.tree-div { height: 25px; margin-left: 12px; }
.tool-speaker { margin-left: 11px; }
.vol { width: 53px; height: 1px; background: #fff; margin-left: 15px; position: relative; }
.vol-thumb { position: absolute; left: 20px; top: -3px; width: 7px; height: 7px; border-radius: 50%; background: #fff; }
.skull { margin-left: 13px; }

.tree-row { height: 24px; display: flex; align-items: center; }
.tree-root { padding-left: 5px; }
.expander {
  width: 9px;
  height: 9px;
  border: 1px solid #6c7680;
  position: relative;
  flex: none;
}
.expander::after { content: ""; position: absolute; left: 1px; right: 1px; top: 3px; height: 1px; background: #c8d0d8; }
.root-icon { margin-left: 11px; }
.tree-label { margin-left: 3px; padding: 1px 2px 0; color: #dfe5ea; line-height: 23px; }
.tree-root .tree-label { margin-left: 4px; padding-left: 1px; }
.tree-children { padding-left: 40px; position: relative; }
.tree-children::before { content: ""; position: absolute; left: 29px; top: 0; bottom: 12px; border-left: 1px dotted #6c7680; }
.tree-children .tree-row { position: relative; }
.tree-children .tree-row::before { content: ""; position: absolute; left: -10px; width: 9px; top: 12px; border-top: 1px dotted #6c7680; }
.tree-icon { width: 22px; height: 20px; margin-top: 4px; }
.tree-selected { background: #0090d0; color: #fff; width: 86px; }

/* ptz */
.ptz { flex: 1; display: flex; padding: 10px 0 0 9px; }
.dial { overflow: visible; }
.pills {
  display: grid;
  grid-template-columns: 36px 36px;
  grid-auto-rows: 20px;
  column-gap: 4px;
  row-gap: 9px;
  margin: 14px 0 0 -6px;
}
.pill { background: #5a6570; display: flex; align-items: center; justify-content: center; }
.pill-l { border-radius: 10px 0 0 10px; }
.pill-r { border-radius: 0 10px 10px 0; }

/* main */
.content { flex: 1; display: flex; flex-direction: column; min-width: 0; }
.toolbar { height: 34px; flex: none; background: #535e6a; display: flex; align-items: center; }
.tools-view { width: 586px; display: flex; align-items: center; height: 100%; flex: none; }
.tool { width: 33px; display: flex; justify-content: center; flex: none; }
.view-div { height: 26px; margin-right: 5px; }
.tool-mic { margin-left: -5px; }

.tools-play { width: 694px; display: flex; align-items: center; height: 100%; flex: none; }
.ptool { width: 27.200px; height: 24px; display: flex; align-items: center; justify-content: center; flex: none; }
.ptool-on { background: #0090d0; height: 20px; width: 23px; margin: 0 2px; }
.loop { margin-left: 19px; }
.speed { margin-left: 25px; width: 150px; padding-top: 7px; }
.speed-track { height: 1px; background: #7b8691; margin-left: 6px; width: 137px; position: relative; }
.speed-thumb { position: absolute; left: 64px; top: -4px; width: 9px; height: 9px; background: #8a949e; border-radius: 50%; }
.speed-labels { display: flex; align-items: center; margin-top: 7px; color: #7b8691; font-size: 9.500px; line-height: 12px; }
.speed-t { margin-left: 3px; }
.speed-first { margin-left: 4px; }
.speed-one { margin-left: 7px; }
.speed-n { margin-left: 10px; }
.runner { margin-left: 11px; }

.tools-zoom { flex: 1; display: flex; align-items: center; padding-left: 11px; }
.zoom-div { height: 25px; margin-left: 9px; }
.zoom-btn { margin-left: 13px; }
.zoom-slider { margin-left: 18px; }
.zoom-slider + .zoom-btn { margin-left: 16px; }
.help-div { height: 25px; margin-left: 9px; }
.help { margin-left: 16px; font-size: 15px; color: #fff; }

.video-grid {
  height: 754px;
  flex: none;
  margin: 0 92px 0 92px;
  padding-top: 1px;
  display: grid;
  grid-template-columns: repeat(4, 333px);
  grid-template-rows: 251px 250px 1fr;
  gap: 1px;
  background: #4a545e;
}
.pane, .pane-empty { background: #2b323a; }
.pane { display: grid; grid-template-columns: 29px 1fr; grid-template-rows: 22px 1fr; position: relative; min-height: 0; }
.pane-selected { outline: 2px solid #0090d0; outline-offset: -1px; z-index: 1; }
.pane-head { grid-column: 1 / 3; display: flex; align-items: center; padding: 0 0 3px 6px; color: #c9d1d8; }
.pane-cam { width: 20px; height: 18px; margin-top: 3px; }
.pane-title { margin-left: 5px; }
.pane-seq { margin-left: auto; }
.pane-max { width: 10px; height: 10px; border: 1px solid #fff; margin-left: 8px; }
.pane-x { width: 9px; height: 9px; margin: 0 3px 0 5px; }
.pane-strip { display: flex; flex-direction: column; align-items: center; color: #dfe5ea; font-size: 10px; line-height: 9px; padding-top: 2px; }
.pane-strip span { margin-top: 1px; }
.pane-video { background: #000; }

/* alarms */
.alarms { flex: 1; min-height: 0; border-top: 3px solid #7a858f; display: flex; flex-direction: column; }
.alarm-tools { height: 43px; flex: none; background: #535e6a; display: flex; align-items: center; padding-left: 9px; }
.a-label { color: #e6ebef; font-size: 12px; }
.a-off { color: #7b8691; }
.a-accept-t { margin-left: 8px; }
.a-flow { margin-left: 26px; }
.a-flow-t { margin-left: 7px; }
.a-clear { margin-left: 32px; }
.a-clear-t { margin-left: 10px; }
.a-undo { margin-left: 26px; }
.a-undo-t { margin-left: 8px; }
.a-text { margin-left: 33px; }
.a-text-t { margin-left: 12px; }
.a-div { height: 30px; margin-left: 10px; }
.a-bell { margin-left: 24px; }

.alarm-body { flex: 1; display: flex; min-height: 0; }
.alarm-table-wrap { flex: 1; overflow: hidden; min-width: 0; }
.alarm-table { width: 1503px; table-layout: fixed; border-collapse: collapse; }
.c-cat { width: 33px; }
.c-title { width: 140px; }
.c-state { width: 87px; }
.c-date { width: 86px; }
.c-prio { width: 52px; }
.c-event { width: 100px; }
.c-dev { width: 79px; }
.c-srv { width: 130px; }
.c-info { width: 100px; }
.c-flow { width: 92px; }
.alarm-table th {
  height: 19px;
  padding: 1px 0 0 5px;
  font-weight: 400;
  text-align: left;
  background: #3c4650;
  border-right: 1px solid #6f7a84;
  border-bottom: 2px solid #6f7a84;
  color: #dfe5ea;
  white-space: nowrap;
  overflow: hidden;
}
.alarm-table th:last-child { border-right: 0; }
.alarm-table .th-cat { padding-left: 3px; }
.alarm-table .th-prio { padding-left: 10px; }
.th-date { position: relative; }
.sort { position: absolute; right: 4px; top: 7px; border: 4px solid transparent; border-top: 5px solid #fff; border-bottom: 0; }
.alarm-table td {
  height: 21px;
  padding: 0 0 0 6px;
  white-space: nowrap;
  overflow: hidden;
  vertical-align: middle;
}
.alarm-table tbody tr:nth-child(odd) { background: #3c4650; }
.alarm-table tbody tr:nth-child(even) { background: #4a535e; }
.alarm-table tbody tr.row-on { background: #0090d0; color: #fff; }
.alarm-table .td-cat { padding: 0; }
.td-cat svg { margin-left: 9px; }
.bell { display: inline-block; vertical-align: -2px; margin: 0 6px 0 0; }
.alarm-table .td-date { position: relative; top: -1px; padding-left: 7px; }
.alarm-table .td-info { padding-left: 5px; }
.alarm-table .td-raised { position: relative; top: -1px; }
.alarm-table .td-prio { padding: 0 0 0 5px; text-align: center; }

.scrollbar { width: 17px; flex: none; background: #3c4650; display: flex; flex-direction: column; }
.sb-cap { height: 6px; border: 1px solid #7a858f; background: #3c4650; }
.sb-btn { height: 14px; margin: 1px 0 0; background: #5c6772; display: flex; align-items: center; justify-content: center; }
.sb-thumb { height: 22px; margin-top: 3px; background: #5c6772; }
.sb-down { margin-top: auto; height: 16px; }
.sb-up { border: 4px solid transparent; border-bottom: 5px solid #aeb6bd; border-top: 0; }
.sb-dn { border: 4px solid transparent; border-top: 5px solid #aeb6bd; border-bottom: 0; }
```
